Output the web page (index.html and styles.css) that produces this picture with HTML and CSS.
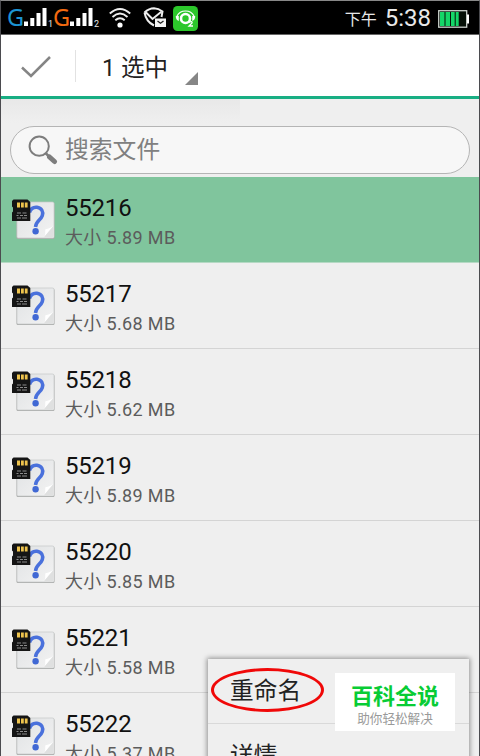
FILE: index.html
```
<!DOCTYPE html>
<html lang="zh-CN">
<head>
    <meta charset="UTF-8">
    <title>搜索文件</title>
    <link rel="stylesheet" href="styles.css">
</head>
<body>

<!-- shared file icon -->
<svg class="defs" width="0" height="0">
    <defs>
        <linearGradient id="paper" x1="0" y1="0" x2="1" y2="1">
            <stop offset="0" stop-color="#dfe1e3"/>
            <stop offset="1" stop-color="#f3f3f3"/>
        </linearGradient>
        <symbol id="file" viewBox="0 0 46 42">
            <rect x="5.5" y="3.5" width="38" height="36.500" rx="1.5" fill="#a9abaa"/>
            <rect x="6" y="3" width="37" height="36" rx="1.5" fill="url(#paper)" stroke="#c6c8c8" stroke-width=".7"/>
            <path d="M32.5 38.700c3-2.400 1-7 2.200-8.600 2 .2 5.500-1.400 7.800-3.600z" fill="#fff"/>
            <path d="M32.500 38.700H42.500V27z" fill="#dfe0e0"/>
            <path d="M18.500 13.500C20 9 23 8 26 8.300c4.500.5 6.600 4.500 5.300 8.300-1.500 4.600-6.300 5-6.800 11.400" fill="none" stroke="#4a71dc" stroke-width="3.500"/>
            <circle cx="24.600" cy="32.200" r="3.200" fill="#4068d4"/>
            <path d="M2.500.5H16.500l2.800 2.600V22H1V13.500l1-1V8.500L1 7.500V2z" fill="#151515"/>
            <path d="M6 3.500h3v5H6zM10 3.500h2.800v5H10zM13.800 3.500h2.800v5h-2.800z" fill="#eec34d"/>
            <path d="M6 14h4m1.500 0h4M5.500 16.500h2m1.500 0h3m1 0h3M6 19h4m1 0h5" stroke="#8c8c8c" stroke-width="1" fill="none"/>
        </symbol>
        <symbol id="bars" viewBox="0 0 23 20">
            <path d="M0 14.500h4V19H0zM6.300 11h4v8h-4zM12.500 6h4v13h-4zM18.500 1h4v18h-4z" fill="#fff"/>
        </symbol>
    </defs>
</svg>

<div class="phone">
    <div class="status">
        <span class="net blue">G</span><svg class="bars"><use href="#bars"/></svg><span class="sim">1</span>
        <span class="net orange">G</span><svg class="bars"><use href="#bars"/></svg><span class="sim">2</span>
        <svg class="wifi" viewBox="0 0 22 20" width="22" height="20">
            <path d="M.8 5.500Q11-3.500 21.200 5.500M3.500 9Q11 2.200 18.500 9M6.300 12.300Q11 8 15.700 12.300" fill="none" stroke="#eee" stroke-width="1.900"/>
            <circle cx="11" cy="17" r="2.600" fill="#fff"/>
        </svg>
        <svg class="shield" viewBox="0 0 24 22" width="24" height="22">
            <path d="M1.500 5.500Q6 1.300 11 1.200Q15.500 1.300 19.500 4.500L18.500 10M1.500 5.500Q3 14.500 11 18.500M3 5.500L9.500 12L18 5" fill="none" stroke="#eee" stroke-width="2"/>
            <path d="M12 11.500h11v8.500H12z" fill="#f4f4f4"/>
            <path d="M14.500 14l3 2.300 3-2.300" fill="none" stroke="#222" stroke-width="1.300"/>
        </svg>
        <svg class="app" viewBox="0 0 25 25" width="25" height="25">
            <rect width="25" height="25" rx="4.500" fill="#2cc72b"/>
            <path d="M4 10Q6.500 5 12.500 5T21 10" fill="none" stroke="#fff" stroke-width="1.200"/>
            <path d="M2.800 10h3v5Q2.600 14 2.800 10M22.200 10h-3v5Q22.400 14 22.200 10" fill="#fff"/>
            <circle cx="12.500" cy="12.500" r="4.500" fill="none" stroke="#fff" stroke-width="2.600"/>
            <path d="M15.500 16.500Q19.500 14.500 19 17L16 20h4" fill="none" stroke="#fff" stroke-width="1.300"/>
        </svg>
        <span class="ampm">下午</span>
        <span class="clock">5:38</span>
        <svg class="battery" viewBox="0 0 31 18" width="31" height="18">
            <rect x=".7" y=".7" width="28" height="16.500" fill="#061008" stroke="#c9cfca" stroke-width="1.300"/>
            <path d="M2 2h4.500v14H2zM7.500 2h4.500v14H7.500zM13 2h3.700v14H13zM17.700 2h3v14h-3z" fill="#14d668"/>
            <path d="M29 4.500h2v9h-2z" fill="#fff"/>
        </svg>
    </div>

    <div class="actionbar">
        <svg class="check" viewBox="0 0 30 22" width="30" height="22">
            <path d="M1 11.500L10 20L29 1" fill="none" stroke="#858585" stroke-width="2.500"/>
        </svg>
        <div class="divider"></div>
        <span class="selected">1 选中</span>
        <svg class="corner" viewBox="0 0 13 13" width="13" height="13"><path d="M13 0V13H0z" fill="#868686"/></svg>
    </div>

    <div class="search-area">
        <div class="search">
            <svg viewBox="0 0 30 30" width="30" height="30">
                <circle cx="11.200" cy="11.200" r="9.600" fill="none" stroke="#7d7d7d" stroke-width="2"/>
                <path d="M17.500 18l3.500 3.500" stroke="#7d7d7d" stroke-width="2.500"/>
                <path d="M21.500 22l5 4.500" stroke="#7d7d7d" stroke-width="5" stroke-linecap="round"/>
            </svg>
            <span>搜索文件</span>
        </div>
    </div>

    <ul class="files">
        <li class="active">
            <svg class="icon"><use href="#file"/></svg>
            <div><p class="name">55216</p><p class="size">大小 5.89 MB</p></div>
        </li>
        <li>
            <svg class="icon"><use href="#file"/></svg>
            <div><p class="name">55217</p><p class="size">大小 5.68 MB</p></div>
        </li>
        <li>
            <svg class="icon"><use href="#file"/></svg>
            <div><p class="name">55218</p><p class="size">大小 5.62 MB</p></div>
        </li>
        <li>
            <svg class="icon"><use href="#file"/></svg>
            <div><p class="name">55219</p><p class="size">大小 5.89 MB</p></div>
        </li>
        <li>
            <svg class="icon"><use href="#file"/></svg>
            <div><p class="name">55220</p><p class="size">大小 5.85 MB</p></div>
        </li>
        <li>
            <svg class="icon"><use href="#file"/></svg>
            <div><p class="name">55221</p><p class="size">大小 5.58 MB</p></div>
        </li>
        <li>
            <svg class="icon"><use href="#file"/></svg>
            <div><p class="name">55222</p><p class="size">大小 5.37 MB</p></div>
        </li>
    </ul>

    <div class="menu">
        <div class="item">重命名</div>
        <div class="item">详情</div>
    </div>
    <div class="ring"></div>
    <div class="brand">
        <strong>百科全说</strong>
        <span>助你轻松解决</span>
    </div>
</div>

</body>
</html>
```
FILE: styles.css
```
* {
    box-sizing: border-box;
}

body {
    margin: 0;
    font-family: Roboto, "Noto Sans CJK SC", sans-serif;
    background: #efefef;
}

.defs {
    position: absolute;
}

.phone {
    position: relative;
    width: 480px;
    height: 756px;
    overflow: hidden;
    border: 1px solid #4b4b4f;
    border-top-color: #888;
    border-bottom: none;
    background: #efefef;
}

/* status bar */
.status {
    display: flex;
    align-items: center;
    height: 34px;
    padding-left: 6px;
    background: #000;
    color: #e8e8e8;
    border-bottom: 1px solid #666;
}

.net {
    width: 16px;
    font-family: "Noto Sans", sans-serif;
    font-size: 23.5px;
    line-height: 30px;
    margin-top: -1px;
}

.blue {
    color: #1c94d2;
}

.orange {
    color: #f26a10;
}

.bars {
    width: 23px;
    height: 20px;
    margin: -1px 0 0 1px;
}

.sim {
    width: 6px;
    padding-left: 1px;
    margin-top: 12px;
    font-size: 9px;
    line-height: 10px;
}

.wifi {
    margin-left: 10px;
}

.shield {
    margin-left: 12px;
}

.app {
    margin: 1px 0 0 6px;
}

.ampm {
    margin-left: auto;
    margin-top: 5px;
    font-size: 16px;
    line-height: 24px;
}

.clock {
    margin: 1px 7px 0 8px;
    font-size: 24px;
    line-height: 30px;
}

.battery {
    margin: 2px 10px 0 0;
}

/* action bar */
.actionbar {
    display: flex;
    align-items: center;
    height: 64px;
    padding-left: 20px;
    background: #fff;
    border-bottom: 3px solid #18ae83;
}

.check {
    margin-top: 3px;
}

.divider {
    width: 1px;
    height: 32px;
    margin-left: 24px;
    background: #e2e2e2;
}

.selected {
    margin: 4px 0 0 26px;
    font-size: 23.5px;
    line-height: 30px;
    color: #222;
}

.corner {
    margin: 25px 0 0 17px;
}

/* search */
.search-area {
    padding: 27px 9px 3px;
    background: linear-gradient(#e8e8e8, #efefef) no-repeat 0 0 / 239px 24px;
}

.search {
    display: flex;
    align-items: center;
    height: 48px;
    padding-left: 17px;
    border: 1px solid #b5b5b5;
    border-radius: 24px;
    background: #f7f7f7;
    font-size: 23.8px;
    line-height: 32px;
    color: #808080;
}

.search span {
    margin-left: 7px;
}

/* file list */
.files {
    margin: 0;
    padding: 0;
    list-style: none;
}

.files li {
    display: flex;
    height: 86px;
    padding: 22px 0 0 10px;
    border-bottom: 1px solid #d4d4d4;
}

.files .active {
    background: #80c59d;
    border-bottom-color: #b5d9c4;
}

.icon {
    width: 46px;
    height: 42px;
    margin-right: 8px;
}

.name {
    margin: -6px 0 0;
    font-size: 24px;
    line-height: 30px;
    letter-spacing: -0.2px;
    color: #111;
}

.size {
    margin: 1px 0 0;
    font-size: 18px;
    line-height: 27px;
    letter-spacing: 0.35px;
    color: #5c5c5c;
}

/* popup menu */
.menu {
    position: absolute;
    left: 207px;
    top: 658px;
    width: 261px;
    height: 120px;
    background: #efefef;
    box-shadow: 0 0 5px 1px rgba(0, 0, 0, 0.4);
}

.item {
    height: 65px;
    padding-left: 22px;
    border-bottom: 1px solid #d9d9d9;
    font-size: 23.7px;
    line-height: 64px;
    color: #222;
}

.ring {
    position: absolute;
    left: 210px;
    top: 667px;
    width: 113px;
    height: 44px;
    border: 3px solid #f00808;
    border-radius: 50%;
}

.brand {
    position: absolute;
    left: 334px;
    top: 672px;
    width: 120px;
    height: 58px;
    padding-top: 9px;
    background: #fff;
    text-align: center;
}

.brand strong {
    display: block;
    font-size: 22px;
    line-height: 30px;
    color: #08cc35;
}

.brand span {
    display: block;
    font-size: 12.6px;
    line-height: 13px;
    color: #999;
}
```
